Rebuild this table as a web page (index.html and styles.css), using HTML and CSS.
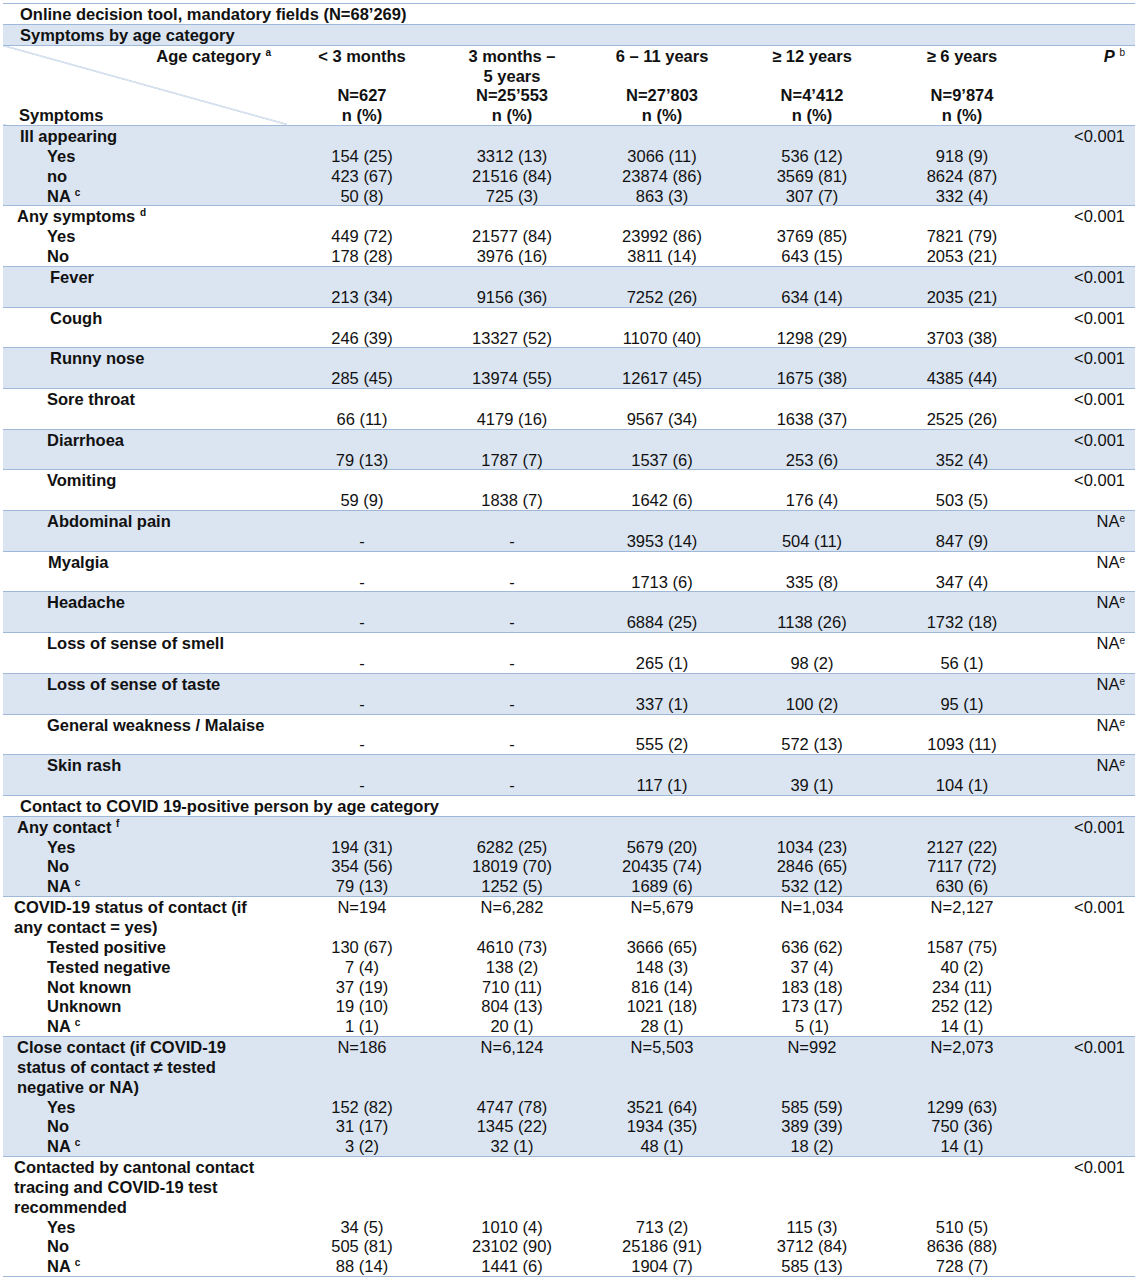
FILE: index.html
```html
<!DOCTYPE html>
<html lang="en">
<head>
  <meta charset="UTF-8">
  <title>Online decision tool, mandatory fields</title>
  <link rel="stylesheet" href="styles.css">
</head>
<body>
<table class="tbl">
  <colgroup>
    <col class="c-lab"><col class="c-num"><col class="c-num"><col class="c-num"><col class="c-num"><col class="c-num"><col class="c-p">
  </colgroup>
  <tr class="white">
    <td colspan="7" class="lab head1"><div class="ln">Online decision tool, mandatory fields (N=68’269)</div></td>
  </tr>
  <tr class="blue">
    <td colspan="7" class="lab head1"><div class="ln">Symptoms by age category</div></td>
  </tr>
  <tr class="white hdr">
    <td class="lab diag">
      <div class="ln right">Age category <sup>a</sup></div>
      <div class="ln">&nbsp;</div>
      <div class="ln">&nbsp;</div>
      <div class="ln sympt">Symptoms</div>
    </td>
    <td class="num b"><div class="ln">&lt; 3 months</div><div class="ln">&nbsp;</div><div class="ln">N=627</div><div class="ln">n (%)</div></td>
    <td class="num b"><div class="ln">3 months –</div><div class="ln">5 years</div><div class="ln">N=25’553</div><div class="ln">n (%)</div></td>
    <td class="num b"><div class="ln">6 – 11 years</div><div class="ln">&nbsp;</div><div class="ln">N=27’803</div><div class="ln">n (%)</div></td>
    <td class="num b"><div class="ln">≥ 12 years</div><div class="ln">&nbsp;</div><div class="ln">N=4’412</div><div class="ln">n (%)</div></td>
    <td class="num b"><div class="ln">≥ 6 years</div><div class="ln">&nbsp;</div><div class="ln">N=9’874</div><div class="ln">n (%)</div></td>
    <td class="pv"><div class="ln"><i>P</i> <sup>b</sup></div></td>
  </tr>

  <tr class="blue">
    <td class="lab"><div class="ln i1">Ill appearing</div><div class="ln i2">Yes</div><div class="ln i2">no</div><div class="ln i2">NA <sup>c</sup></div></td>
    <td class="num"><div class="ln">&nbsp;</div><div class="ln">154 (25)</div><div class="ln">423 (67)</div><div class="ln">50 (8)</div></td>
    <td class="num"><div class="ln">&nbsp;</div><div class="ln">3312 (13)</div><div class="ln">21516 (84)</div><div class="ln">725 (3)</div></td>
    <td class="num"><div class="ln">&nbsp;</div><div class="ln">3066 (11)</div><div class="ln">23874 (86)</div><div class="ln">863 (3)</div></td>
    <td class="num"><div class="ln">&nbsp;</div><div class="ln">536 (12)</div><div class="ln">3569 (81)</div><div class="ln">307 (7)</div></td>
    <td class="num"><div class="ln">&nbsp;</div><div class="ln">918 (9)</div><div class="ln">8624 (87)</div><div class="ln">332 (4)</div></td>
    <td class="pv"><div class="ln">&lt;0.001</div></td>
  </tr>
  <tr class="white">
    <td class="lab"><div class="ln i0">Any symptoms <sup>d</sup></div><div class="ln i2">Yes</div><div class="ln i2">No</div></td>
    <td class="num"><div class="ln">&nbsp;</div><div class="ln">449 (72)</div><div class="ln">178 (28)</div></td>
    <td class="num"><div class="ln">&nbsp;</div><div class="ln">21577 (84)</div><div class="ln">3976 (16)</div></td>
    <td class="num"><div class="ln">&nbsp;</div><div class="ln">23992 (86)</div><div class="ln">3811 (14)</div></td>
    <td class="num"><div class="ln">&nbsp;</div><div class="ln">3769 (85)</div><div class="ln">643 (15)</div></td>
    <td class="num"><div class="ln">&nbsp;</div><div class="ln">7821 (79)</div><div class="ln">2053 (21)</div></td>
    <td class="pv"><div class="ln">&lt;0.001</div></td>
  </tr>

  <tr class="blue">
    <td class="lab"><div class="ln i3">Fever</div></td>
    <td class="num"><div class="ln">&nbsp;</div><div class="ln">213 (34)</div></td>
    <td class="num"><div class="ln">&nbsp;</div><div class="ln">9156 (36)</div></td>
    <td class="num"><div class="ln">&nbsp;</div><div class="ln">7252 (26)</div></td>
    <td class="num"><div class="ln">&nbsp;</div><div class="ln">634 (14)</div></td>
    <td class="num"><div class="ln">&nbsp;</div><div class="ln">2035 (21)</div></td>
    <td class="pv"><div class="ln">&lt;0.001</div></td>
  </tr>
  <tr class="white">
    <td class="lab"><div class="ln i3">Cough</div></td>
    <td class="num"><div class="ln">&nbsp;</div><div class="ln">246 (39)</div></td>
    <td class="num"><div class="ln">&nbsp;</div><div class="ln">13327 (52)</div></td>
    <td class="num"><div class="ln">&nbsp;</div><div class="ln">11070 (40)</div></td>
    <td class="num"><div class="ln">&nbsp;</div><div class="ln">1298 (29)</div></td>
    <td class="num"><div class="ln">&nbsp;</div><div class="ln">3703 (38)</div></td>
    <td class="pv"><div class="ln">&lt;0.001</div></td>
  </tr>
  <tr class="blue">
    <td class="lab"><div class="ln i3">Runny nose</div></td>
    <td class="num"><div class="ln">&nbsp;</div><div class="ln">285 (45)</div></td>
    <td class="num"><div class="ln">&nbsp;</div><div class="ln">13974 (55)</div></td>
    <td class="num"><div class="ln">&nbsp;</div><div class="ln">12617 (45)</div></td>
    <td class="num"><div class="ln">&nbsp;</div><div class="ln">1675 (38)</div></td>
    <td class="num"><div class="ln">&nbsp;</div><div class="ln">4385 (44)</div></td>
    <td class="pv"><div class="ln">&lt;0.001</div></td>
  </tr>
  <tr class="white">
    <td class="lab"><div class="ln i2">Sore throat</div></td>
    <td class="num"><div class="ln">&nbsp;</div><div class="ln">66 (11)</div></td>
    <td class="num"><div class="ln">&nbsp;</div><div class="ln">4179 (16)</div></td>
    <td class="num"><div class="ln">&nbsp;</div><div class="ln">9567 (34)</div></td>
    <td class="num"><div class="ln">&nbsp;</div><div class="ln">1638 (37)</div></td>
    <td class="num"><div class="ln">&nbsp;</div><div class="ln">2525 (26)</div></td>
    <td class="pv"><div class="ln">&lt;0.001</div></td>
  </tr>
  <tr class="blue">
    <td class="lab"><div class="ln i2">Diarrhoea</div></td>
    <td class="num"><div class="ln">&nbsp;</div><div class="ln">79 (13)</div></td>
    <td class="num"><div class="ln">&nbsp;</div><div class="ln">1787 (7)</div></td>
    <td class="num"><div class="ln">&nbsp;</div><div class="ln">1537 (6)</div></td>
    <td class="num"><div class="ln">&nbsp;</div><div class="ln">253 (6)</div></td>
    <td class="num"><div class="ln">&nbsp;</div><div class="ln">352 (4)</div></td>
    <td class="pv"><div class="ln">&lt;0.001</div></td>
  </tr>
  <tr class="white">
    <td class="lab"><div class="ln i2">Vomiting</div></td>
    <td class="num"><div class="ln">&nbsp;</div><div class="ln">59 (9)</div></td>
    <td class="num"><div class="ln">&nbsp;</div><div class="ln">1838 (7)</div></td>
    <td class="num"><div class="ln">&nbsp;</div><div class="ln">1642 (6)</div></td>
    <td class="num"><div class="ln">&nbsp;</div><div class="ln">176 (4)</div></td>
    <td class="num"><div class="ln">&nbsp;</div><div class="ln">503 (5)</div></td>
    <td class="pv"><div class="ln">&lt;0.001</div></td>
  </tr>
  <tr class="blue">
    <td class="lab"><div class="ln i2">Abdominal pain</div></td>
    <td class="num"><div class="ln">&nbsp;</div><div class="ln">-</div></td>
    <td class="num"><div class="ln">&nbsp;</div><div class="ln">-</div></td>
    <td class="num"><div class="ln">&nbsp;</div><div class="ln">3953 (14)</div></td>
    <td class="num"><div class="ln">&nbsp;</div><div class="ln">504 (11)</div></td>
    <td class="num"><div class="ln">&nbsp;</div><div class="ln">847 (9)</div></td>
    <td class="pv"><div class="ln">NA<sup class="e">e</sup></div></td>
  </tr>
  <tr class="white">
    <td class="lab"><div class="ln i2b">Myalgia</div></td>
    <td class="num"><div class="ln">&nbsp;</div><div class="ln">-</div></td>
    <td class="num"><div class="ln">&nbsp;</div><div class="ln">-</div></td>
    <td class="num"><div class="ln">&nbsp;</div><div class="ln">1713 (6)</div></td>
    <td class="num"><div class="ln">&nbsp;</div><div class="ln">335 (8)</div></td>
    <td class="num"><div class="ln">&nbsp;</div><div class="ln">347 (4)</div></td>
    <td class="pv"><div class="ln">NA<sup class="e">e</sup></div></td>
  </tr>
  <tr class="blue">
    <td class="lab"><div class="ln i2">Headache</div></td>
    <td class="num"><div class="ln">&nbsp;</div><div class="ln">-</div></td>
    <td class="num"><div class="ln">&nbsp;</div><div class="ln">-</div></td>
    <td class="num"><div class="ln">&nbsp;</div><div class="ln">6884 (25)</div></td>
    <td class="num"><div class="ln">&nbsp;</div><div class="ln">1138 (26)</div></td>
    <td class="num"><div class="ln">&nbsp;</div><div class="ln">1732 (18)</div></td>
    <td class="pv"><div class="ln">NA<sup class="e">e</sup></div></td>
  </tr>
  <tr class="white">
    <td class="lab"><div class="ln i2">Loss of sense of smell</div></td>
    <td class="num"><div class="ln">&nbsp;</div><div class="ln">-</div></td>
    <td class="num"><div class="ln">&nbsp;</div><div class="ln">-</div></td>
    <td class="num"><div class="ln">&nbsp;</div><div class="ln">265 (1)</div></td>
    <td class="num"><div class="ln">&nbsp;</div><div class="ln">98 (2)</div></td>
    <td class="num"><div class="ln">&nbsp;</div><div class="ln">56 (1)</div></td>
    <td class="pv"><div class="ln">NA<sup class="e">e</sup></div></td>
  </tr>
  <tr class="blue">
    <td class="lab"><div class="ln i2">Loss of sense of taste</div></td>
    <td class="num"><div class="ln">&nbsp;</div><div class="ln">-</div></td>
    <td class="num"><div class="ln">&nbsp;</div><div class="ln">-</div></td>
    <td class="num"><div class="ln">&nbsp;</div><div class="ln">337 (1)</div></td>
    <td class="num"><div class="ln">&nbsp;</div><div class="ln">100 (2)</div></td>
    <td class="num"><div class="ln">&nbsp;</div><div class="ln">95 (1)</div></td>
    <td class="pv"><div class="ln">NA<sup class="e">e</sup></div></td>
  </tr>
  <tr class="white">
    <td class="lab"><div class="ln i2">General weakness / Malaise</div></td>
    <td class="num"><div class="ln">&nbsp;</div><div class="ln">-</div></td>
    <td class="num"><div class="ln">&nbsp;</div><div class="ln">-</div></td>
    <td class="num"><div class="ln">&nbsp;</div><div class="ln">555 (2)</div></td>
    <td class="num"><div class="ln">&nbsp;</div><div class="ln">572 (13)</div></td>
    <td class="num"><div class="ln">&nbsp;</div><div class="ln">1093 (11)</div></td>
    <td class="pv"><div class="ln">NA<sup class="e">e</sup></div></td>
  </tr>
  <tr class="blue">
    <td class="lab"><div class="ln i2">Skin rash</div></td>
    <td class="num"><div class="ln">&nbsp;</div><div class="ln">-</div></td>
    <td class="num"><div class="ln">&nbsp;</div><div class="ln">-</div></td>
    <td class="num"><div class="ln">&nbsp;</div><div class="ln">117 (1)</div></td>
    <td class="num"><div class="ln">&nbsp;</div><div class="ln">39 (1)</div></td>
    <td class="num"><div class="ln">&nbsp;</div><div class="ln">104 (1)</div></td>
    <td class="pv"><div class="ln">NA<sup class="e">e</sup></div></td>
  </tr>

  <tr class="white">
    <td colspan="7" class="lab head1"><div class="ln">Contact to COVID 19-positive person by age category</div></td>
  </tr>
  <tr class="blue">
    <td class="lab"><div class="ln i0">Any contact <sup>f</sup></div><div class="ln i2">Yes</div><div class="ln i2">No</div><div class="ln i2">NA <sup>c</sup></div></td>
    <td class="num"><div class="ln">&nbsp;</div><div class="ln">194 (31)</div><div class="ln">354 (56)</div><div class="ln">79 (13)</div></td>
    <td class="num"><div class="ln">&nbsp;</div><div class="ln">6282 (25)</div><div class="ln">18019 (70)</div><div class="ln">1252 (5)</div></td>
    <td class="num"><div class="ln">&nbsp;</div><div class="ln">5679 (20)</div><div class="ln">20435 (74)</div><div class="ln">1689 (6)</div></td>
    <td class="num"><div class="ln">&nbsp;</div><div class="ln">1034 (23)</div><div class="ln">2846 (65)</div><div class="ln">532 (12)</div></td>
    <td class="num"><div class="ln">&nbsp;</div><div class="ln">2127 (22)</div><div class="ln">7117 (72)</div><div class="ln">630 (6)</div></td>
    <td class="pv"><div class="ln">&lt;0.001</div></td>
  </tr>
  <tr class="white">
    <td class="lab"><div class="ln im">COVID-19 status of contact (if</div><div class="ln im">any contact = yes)</div><div class="ln i2">Tested positive</div><div class="ln i2">Tested negative</div><div class="ln i2">Not known</div><div class="ln i2">Unknown</div><div class="ln i2">NA <sup>c</sup></div></td>
    <td class="num"><div class="ln">N=194</div><div class="ln">&nbsp;</div><div class="ln">130 (67)</div><div class="ln">7 (4)</div><div class="ln">37 (19)</div><div class="ln">19 (10)</div><div class="ln">1 (1)</div></td>
    <td class="num"><div class="ln">N=6,282</div><div class="ln">&nbsp;</div><div class="ln">4610 (73)</div><div class="ln">138 (2)</div><div class="ln">710 (11)</div><div class="ln">804 (13)</div><div class="ln">20 (1)</div></td>
    <td class="num"><div class="ln">N=5,679</div><div class="ln">&nbsp;</div><div class="ln">3666 (65)</div><div class="ln">148 (3)</div><div class="ln">816 (14)</div><div class="ln">1021 (18)</div><div class="ln">28 (1)</div></td>
    <td class="num"><div class="ln">N=1,034</div><div class="ln">&nbsp;</div><div class="ln">636 (62)</div><div class="ln">37 (4)</div><div class="ln">183 (18)</div><div class="ln">173 (17)</div><div class="ln">5 (1)</div></td>
    <td class="num"><div class="ln">N=2,127</div><div class="ln">&nbsp;</div><div class="ln">1587 (75)</div><div class="ln">40 (2)</div><div class="ln">234 (11)</div><div class="ln">252 (12)</div><div class="ln">14 (1)</div></td>
    <td class="pv"><div class="ln">&lt;0.001</div></td>
  </tr>
  <tr class="blue">
    <td class="lab"><div class="ln i0">Close contact (if COVID-19</div><div class="ln i0">status of contact ≠ tested</div><div class="ln i0">negative or NA)</div><div class="ln i2">Yes</div><div class="ln i2">No</div><div class="ln i2">NA <sup>c</sup></div></td>
    <td class="num"><div class="ln">N=186</div><div class="ln">&nbsp;</div><div class="ln">&nbsp;</div><div class="ln">152 (82)</div><div class="ln">31 (17)</div><div class="ln">3 (2)</div></td>
    <td class="num"><div class="ln">N=6,124</div><div class="ln">&nbsp;</div><div class="ln">&nbsp;</div><div class="ln">4747 (78)</div><div class="ln">1345 (22)</div><div class="ln">32 (1)</div></td>
    <td class="num"><div class="ln">N=5,503</div><div class="ln">&nbsp;</div><div class="ln">&nbsp;</div><div class="ln">3521 (64)</div><div class="ln">1934 (35)</div><div class="ln">48 (1)</div></td>
    <td class="num"><div class="ln">N=992</div><div class="ln">&nbsp;</div><div class="ln">&nbsp;</div><div class="ln">585 (59)</div><div class="ln">389 (39)</div><div class="ln">18 (2)</div></td>
    <td class="num"><div class="ln">N=2,073</div><div class="ln">&nbsp;</div><div class="ln">&nbsp;</div><div class="ln">1299 (63)</div><div class="ln">750 (36)</div><div class="ln">14 (1)</div></td>
    <td class="pv"><div class="ln">&lt;0.001</div></td>
  </tr>
  <tr class="white last">
    <td class="lab"><div class="ln im">Contacted by cantonal contact</div><div class="ln im">tracing and COVID-19 test</div><div class="ln im">recommended</div><div class="ln i2">Yes</div><div class="ln i2">No</div><div class="ln i2">NA <sup>c</sup></div></td>
    <td class="num"><div class="ln">&nbsp;</div><div class="ln">&nbsp;</div><div class="ln">&nbsp;</div><div class="ln">34 (5)</div><div class="ln">505 (81)</div><div class="ln">88 (14)</div></td>
    <td class="num"><div class="ln">&nbsp;</div><div class="ln">&nbsp;</div><div class="ln">&nbsp;</div><div class="ln">1010 (4)</div><div class="ln">23102 (90)</div><div class="ln">1441 (6)</div></td>
    <td class="num"><div class="ln">&nbsp;</div><div class="ln">&nbsp;</div><div class="ln">&nbsp;</div><div class="ln">713 (2)</div><div class="ln">25186 (91)</div><div class="ln">1904 (7)</div></td>
    <td class="num"><div class="ln">&nbsp;</div><div class="ln">&nbsp;</div><div class="ln">&nbsp;</div><div class="ln">115 (3)</div><div class="ln">3712 (84)</div><div class="ln">585 (13)</div></td>
    <td class="num"><div class="ln">&nbsp;</div><div class="ln">&nbsp;</div><div class="ln">&nbsp;</div><div class="ln">510 (5)</div><div class="ln">8636 (88)</div><div class="ln">728 (7)</div></td>
    <td class="pv"><div class="ln">&lt;0.001</div></td>
  </tr>
</table>
</body>
</html>
```

FILE: styles.css
```css
body {
    margin: 0;
    padding: 3px 0 0 3px;
    background-color: white;
    font-family: "Liberation Sans", Arial, sans-serif;
    font-size: 16.5px;
    color: #111;
}

.tbl {
    border-collapse: collapse;
    table-layout: fixed;
    width: 1132px;
}

.c-lab { width: 284px; }
.c-num { width: 150px; }
.c-p { width: 98px; }

.tbl tr {
    border-top: 1px solid #9fb8d8;
}

.tbl tr.last {
    border-bottom: 1px solid #9fb8d8;
}

.tbl td {
    padding: 0;
    vertical-align: top;
}

.blue { background-color: #dbe5f1; }
.white { background-color: white; }

/* one text line of the word table */
.ln {
    height: 18.85px;
    padding-top: 1px;
    line-height: 19.85px;
    white-space: nowrap;
}

.lab { font-weight: bold; }
.head1 {
    padding-left: 17px !important;
}

.i0 { padding-left: 14px; }
.im { padding-left: 11px; }
.i1 { padding-left: 17px; }
.i2 { padding-left: 44px; }
.i2b { padding-left: 45px; }
.i3 { padding-left: 47px; }

.right {
    text-align: right;
    padding-right: 16px;
}

.sympt { padding-left: 16px; }

.diag {
    background: linear-gradient(to top right, transparent calc(50% - 0.8px), #9fb8d8 50%, transparent calc(50% + 0.8px));
}

.num {
    text-align: center;
}

.num.b { font-weight: bold; }

.pv {
    text-align: right;
    padding-right: 10px !important;
}

.pv i { font-weight: bold; }

sup {
    font-size: 10px;
    line-height: 0;
    vertical-align: 6px;
}

sup.e { vertical-align: 5px; }
```
